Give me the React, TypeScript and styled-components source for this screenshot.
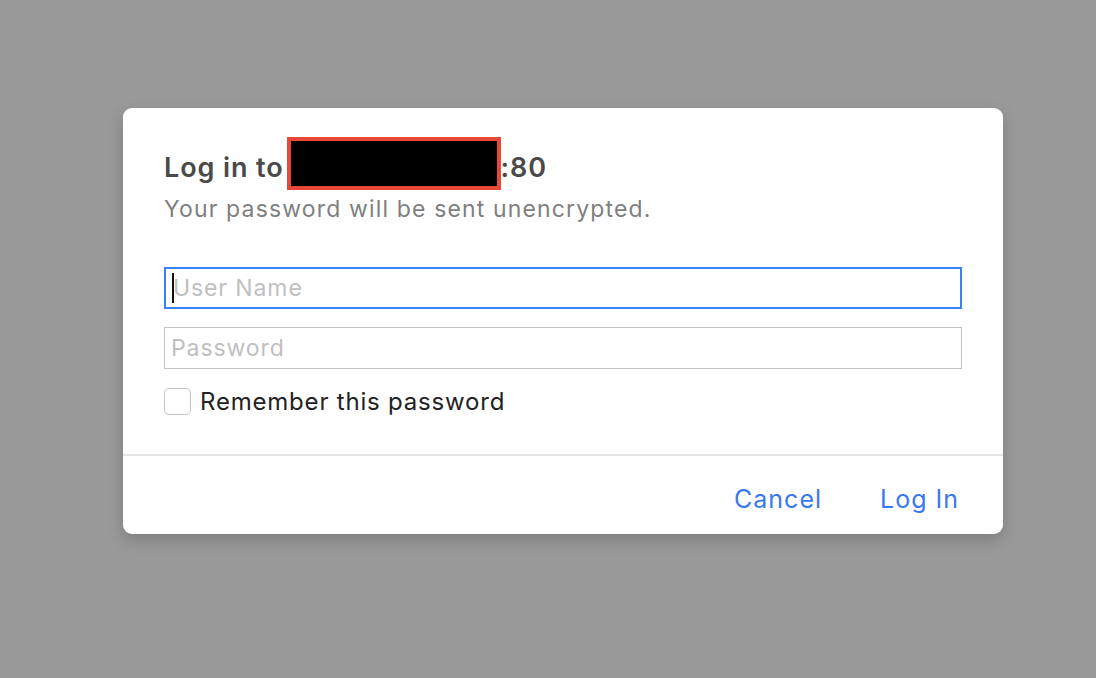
import styled, { createGlobalStyle } from 'styled-components';

const GlobalStyle = createGlobalStyle`
  html, body {
    margin: 0;
    padding: 0;
    background: #999999;
    font-family: Inter, 'Liberation Sans', Arial, sans-serif;
  }
`;

const Page = styled.div`
  width: 1096px;
  height: 678px;
  padding: 108px 0 0 123px;
  box-sizing: border-box;
`;

const Dialog = styled.div`
  width: 880px;
  height: 426px;
  background: #ffffff;
  border-radius: 9px;
  box-shadow: 0 6px 16px rgba(0, 0, 0, 0.18);
  display: flex;
  flex-direction: column;
`;

const Body = styled.div`
  padding: 29px 41px 0 41px;
  display: flex;
  flex-direction: column;
  height: 346px;
  box-sizing: border-box;
`;

const Title = styled.div`
  display: flex;
  align-items: center;
  height: 53px;
  font-size: 27px;
  font-weight: 600;
  letter-spacing: 0.9px;
  color: #4a4a4a;
`;

const TitleText = styled.span`
  margin-top: 7px;
`;

const Redacted = styled.span`
  width: 214px;
  height: 53px;
  box-sizing: border-box;
  background: #000;
  border: 4px solid #e8473a;
  margin: 0 0 0 3px;
`;

const Subtitle = styled.div`
  font-size: 23px;
  line-height: 28px;
  letter-spacing: 1.15px;
  color: #7f7f7f;
  margin-top: 5px;
`;

const Field = styled.div<{ $focused?: boolean }>`
  width: 798px;
  height: 42px;
  box-sizing: border-box;
  border: ${({ $focused }) => ($focused ? '2px solid #3b82f6' : '1px solid #c2c2c2')};
  display: flex;
  align-items: center;
  padding-left: 6px;
  font-size: 23px;
  letter-spacing: 0.9px;
  color: #c0c0c0;
  margin-top: ${({ $focused }) => ($focused ? '44px' : '18px')};
`;

const Caret = styled.span`
  width: 2px;
  height: 30px;
  background: #111;
  margin-right: -1px;
`;

const Remember = styled.label`
  display: flex;
  align-items: center;
  margin-top: 18px;
  font-size: 24px;
  letter-spacing: 0.8px;
  color: #222;
  gap: 9px;
`;

const Box = styled.span`
  width: 27px;
  height: 27px;
  box-sizing: border-box;
  border: 1px solid #c4c4c4;
  border-radius: 5px;
  background: #fff;
`;

const Footer = styled.div`
  border-top: 2px solid #e3e3e3;
  flex: 1;
  display: flex;
  justify-content: flex-end;
  align-items: center;
  padding: 8px 44px 0 0;
  gap: 58px;
`;

const Action = styled.button`
  border: none;
  background: none;
  padding: 0;
  font-family: inherit;
  font-size: 25px;
  letter-spacing: 1px;
  color: #3a78f2;
  cursor: pointer;
`;

export default function App() {
  return (
    <>
      <GlobalStyle />
      <Page>
        <Dialog>
          <Body>
            <Title>
              <TitleText>Log in to</TitleText>
              <Redacted />
              <TitleText>:80</TitleText>
            </Title>
            <Subtitle>Your password will be sent unencrypted.</Subtitle>
            <Field $focused>
              <Caret />
              User Name
            </Field>
            <Field>Password</Field>
            <Remember>
              <Box />
              Remember this password
            </Remember>
          </Body>
          <Footer>
            <Action>Cancel</Action>
            <Action>Log In</Action>
          </Footer>
        </Dialog>
      </Page>
    </>
  );
}
